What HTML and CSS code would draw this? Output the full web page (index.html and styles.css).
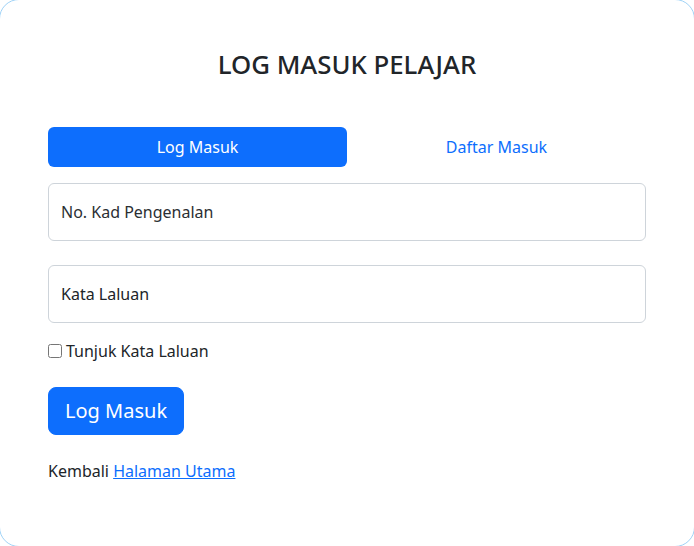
FILE: index.html
```html
<!DOCTYPE html>
<html lang="ms">
<head>
<meta charset="utf-8">
<title>Log Masuk Pelajar</title>
<link rel="stylesheet" href="styles.css">
</head>
<body>
<div class="card">
  <h1 class="title">LOG MASUK PELAJAR</h1>
  <div class="tabs">
    <a class="tab active" href="#">Log Masuk</a>
    <a class="tab" href="#">Daftar Masuk</a>
  </div>
  <form class="form">
    <div class="field"><span class="field-label">No. Kad Pengenalan</span></div>
    <div class="field field-gap"><span class="field-label dark">Kata Laluan</span></div>
    <label class="check"><input type="checkbox" class="check-box"><span>Tunjuk Kata Laluan</span></label>
    <button type="button" class="btn">Log Masuk</button>
  </form>
  <p class="back">Kembali <a href="#" class="link">Halaman Utama</a></p>
</div>
</body>
</html>
```
FILE: styles.css
```css
html, body {
  margin: 0;
  padding: 0;
  background: #fff;
  overflow: hidden;
}
body {
  font-family: "Noto Sans", "Open Sans", sans-serif;
  font-size: 16px;
  line-height: 1.5;
  color: #212529;
}
.card {
  box-sizing: border-box;
  width: 696px;
  height: 548px;
  margin: -1px;
  border: 1px solid #9fd2f6;
  border-radius: 20px;
  padding: 49px 48px;
  background: #fff;
}
.title {
  margin: 0 0 47px;
  font-size: 25.8px;
  font-weight: 460;
  line-height: 1.2;
  text-align: center;
  color: #212529;
}
.tabs {
  display: grid;
  grid-template-columns: 1fr 1fr;
}
.tab {
  display: block;
  padding: 8px 16px;
  text-align: center;
  text-decoration: none;
  color: #0d6efd;
  border-radius: 6px;
}
.tab.active {
  background: #0d6efd;
  color: #fff;
}
.form {
  margin: 16px 0 0;
  display: flex;
  flex-direction: column;
  align-items: flex-start;
}
.field {
  box-sizing: border-box;
  width: 100%;
  height: 58px;
  border: 1px solid #ced4da;
  border-radius: 6px;
  padding: 0 12px;
  display: flex;
  align-items: center;
}
.field-gap {
  margin-top: 24px;
}
.field-label {
  color: #2b2f33;
}
.field-label.dark {
  color: #212529;
}
.check {
  margin-top: 16px;
  display: flex;
  align-items: center;
}
.check-box {
  margin: 0 4px 0 0;
  width: 14px;
  height: 14px;
}
.btn {
  margin-top: 24px;
  font-family: inherit;
  font-size: 20px;
  line-height: 1.5;
  padding: 8px 16px;
  border: 1px solid #0d6efd;
  border-radius: 8px;
  background: #0d6efd;
  color: #fff;
}
.back {
  margin: 24px 0 0;
}
.link {
  color: #0d6efd;
  text-decoration: underline;
}
```
